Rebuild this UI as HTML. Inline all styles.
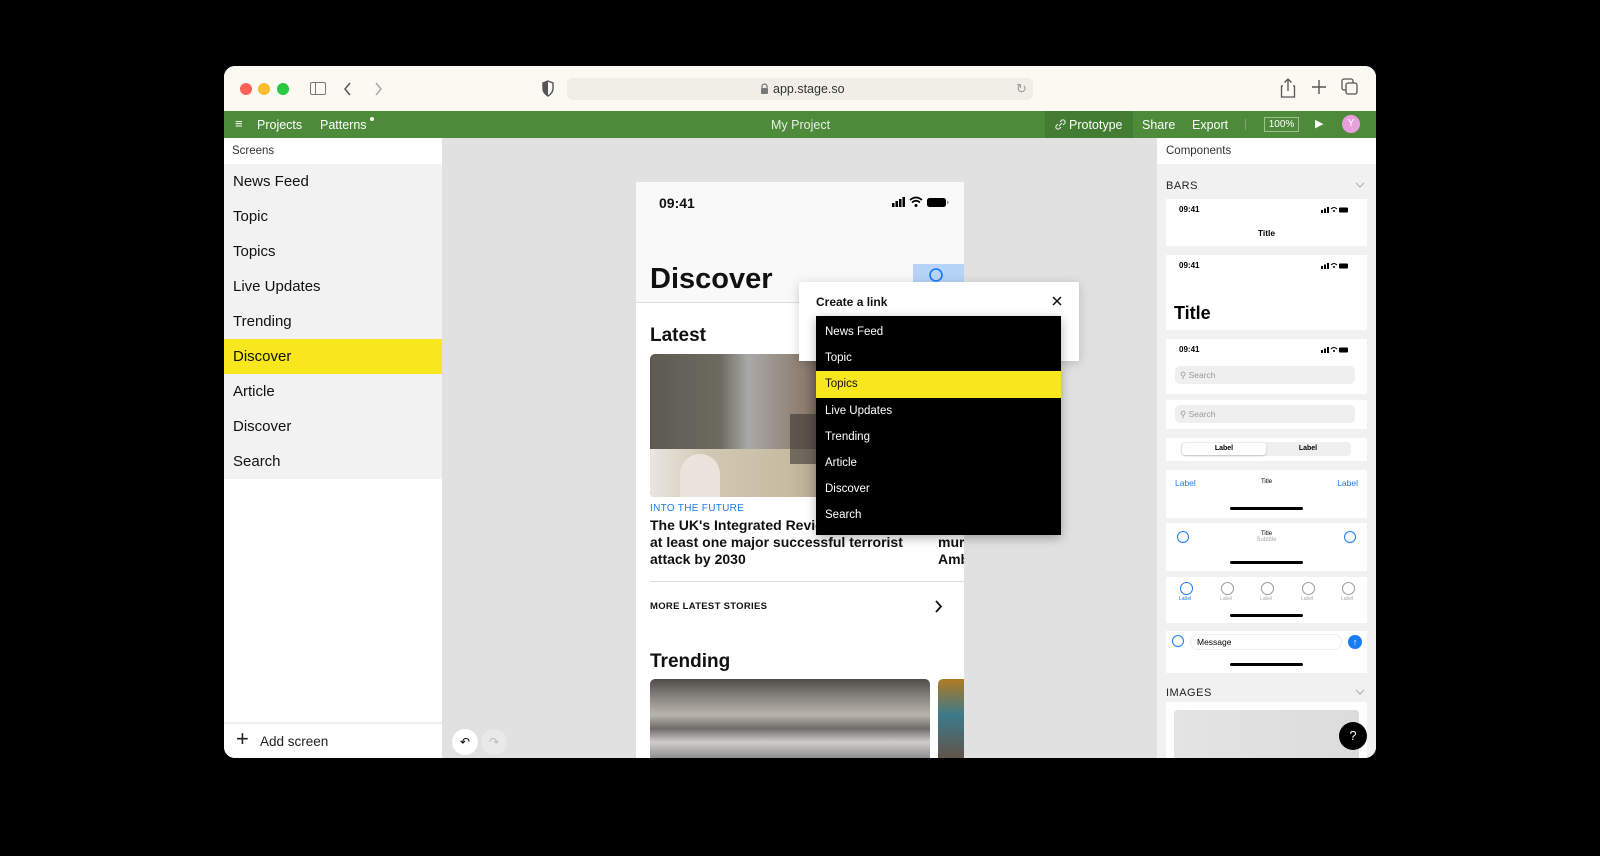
<!DOCTYPE html>
<html><head><meta charset="utf-8"><style>
*{box-sizing:border-box;margin:0;padding:0}
body{width:1600px;height:856px;background:#000;font-family:"Liberation Sans",sans-serif;position:relative;overflow:hidden}
.a{position:absolute}
.win{left:224px;top:66px;width:1152px;height:692px;background:#fff;border-radius:11px;overflow:hidden}
.t{white-space:nowrap}
.side div.i{position:absolute;left:0;width:218px;height:35px;background:#f2f2f2;font-size:15px;padding-left:9px;line-height:36px;color:#111}
.card{position:absolute;left:9px;width:201px;background:#fff}
.dd div{height:26.2px;line-height:27px;padding-left:9px;font-size:11.5px;color:#fff}
.sb{position:absolute;left:155px;top:7px}
</style></head><body>
<div class="a win">
 <div class="a" style="left:0;top:0;width:1152px;height:45px;background:#fbfaf2"></div>
 <div class="a" style="left:16px;top:17px;width:12px;height:12px;border-radius:6px;background:#fe5f57"></div>
 <div class="a" style="left:34px;top:17px;width:12px;height:12px;border-radius:6px;background:#febc2e"></div>
 <div class="a" style="left:53px;top:17px;width:12px;height:12px;border-radius:6px;background:#28c840"></div>
 <div class="a" style="left:86px;top:16px;width:16px;height:13px;border:1.3px solid #777;border-radius:2px"><div style="width:5px;height:100%;border-right:1.3px solid #777"></div></div>
 <svg class="a" style="left:118px;top:14px" width="12" height="18"><path d="M8 3 L3 9 L8 15" stroke="#555" stroke-width="1.5" fill="none"/></svg>
 <svg class="a" style="left:148px;top:14px" width="12" height="18"><path d="M4 3 L9 9 L4 15" stroke="#aaa" stroke-width="1.5" fill="none"/></svg>
 <svg class="a" style="left:317px;top:14px" width="14" height="17"><path d="M7 1 L12 3 V9 C12 12 10 14 7 16 C4 14 2 12 2 9 V3 Z" stroke="#555" stroke-width="1.4" fill="none"/><path d="M7 1 V16 C4 14 2 12 2 9 V3 Z" fill="#555"/></svg>
 <div class="a" style="left:343px;top:12px;width:466px;height:22px;background:#efeee7;border-radius:6px"></div>
 <svg class="a" style="left:536px;top:17px" width="9" height="12"><path d="M2 5 V3.5 A2.5 2.5 0 0 1 7 3.5 V5" stroke="#777" stroke-width="1.2" fill="none"/><rect x="1" y="5" width="7" height="6" rx="1" fill="#777"/></svg>
 <div class="a t" style="left:549px;top:16px;font-size:12.5px;color:#333">app.stage.so</div>
 <div class="a t" style="left:792px;top:15px;font-size:13px;color:#999">&#8635;</div>
 <svg class="a" style="left:1056px;top:11px" width="16" height="22"><path d="M3 9 H1.5 V20 H14.5 V9 H13 M8 14 V2 M4.5 5.5 L8 2 L11.5 5.5" stroke="#555" stroke-width="1.3" fill="none"/></svg>
 <svg class="a" style="left:1087px;top:13px" width="16" height="16"><path d="M8 1 V15 M1 8 H15" stroke="#555" stroke-width="1.4"/></svg>
 <svg class="a" style="left:1117px;top:12px" width="18" height="18"><rect x="1" y="1" width="11" height="11" rx="2" stroke="#555" stroke-width="1.3" fill="none"/><rect x="5" y="5" width="11" height="11" rx="2" stroke="#555" stroke-width="1.3" fill="#fbfaf2"/></svg>
 <div class="a" style="left:0;top:45px;width:1152px;height:27px;background:#4d8b3a;color:#fff;font-size:12.5px">
  <div class="a t" style="left:11px;top:5px;font-size:13px">&#8801;</div>
  <div class="a t" style="left:33px;top:7px">Projects</div>
  <div class="a t" style="left:96px;top:7px">Patterns</div>
  <div class="a" style="left:146px;top:6px;width:4px;height:4px;border-radius:2px;background:#fff"></div>
  <div class="a t" style="left:547px;top:7px;color:#e8f0e4">My Project</div>
  <div class="a" style="left:821px;top:0;width:88px;height:27px;background:#437c33"></div>
  <svg class="a" style="left:830px;top:7px" width="13" height="13"><path d="M5 8 L8 5 M4 6 L2.5 7.5 A2 2 0 0 0 5.5 10.5 L7 9 M6 4 L7.5 2.5 A2 2 0 0 1 10.5 5.5 L9 7" stroke="#dde8d8" stroke-width="1.2" fill="none"/></svg>
  <div class="a t" style="left:845px;top:7px">Prototype</div>
  <div class="a t" style="left:918px;top:7px">Share</div>
  <div class="a t" style="left:968px;top:7px">Export</div>
  <div class="a" style="left:1021px;top:8px;width:1px;height:11px;background:#7aa96a"></div>
  <div class="a t" style="left:1040px;top:6px;width:35px;height:15px;border:1px solid #9cc08e;font-size:10px;text-align:center;line-height:13px">100%</div>
  <div class="a t" style="left:1091px;top:6px;font-size:11px">&#9654;</div>
  <div class="a" style="left:1118px;top:4px;width:18px;height:18px;border-radius:9px;background:#e99fdd;font-size:10px;text-align:center;line-height:18px">Y</div>
 </div>
 <div class="a side" style="left:0;top:72px;width:218px;height:620px;background:#fff">
  <div class="a t" style="left:8px;top:7px;font-size:11.5px;color:#333">Screens</div>
  <div class="i" style="top:26px">News Feed</div>
  <div class="i" style="top:61px">Topic</div>
  <div class="i" style="top:96px">Topics</div>
  <div class="i" style="top:131px">Live Updates</div>
  <div class="i" style="top:166px">Trending</div>
  <div class="i" style="top:201px;background:#f8e71c">Discover</div>
  <div class="i" style="top:236px">Article</div>
  <div class="i" style="top:271px">Discover</div>
  <div class="i" style="top:306px">Search</div>
  <div class="a" style="left:0;top:584px;width:218px;height:2px;background:#efefef"></div>
  <div class="a t" style="left:12px;top:588px;font-size:22px;font-weight:300;color:#222">+</div>
  <div class="a t" style="left:36px;top:596px;font-size:13.5px;color:#222">Add screen</div>
 </div>
 <div class="a" style="left:218px;top:72px;width:715px;height:620px;background:#e1e1e1;overflow:hidden">
  <div class="a" style="left:10px;top:591px;width:26px;height:26px;border-radius:13px;background:#fff;font-size:12px;text-align:center;line-height:26px">&#8630;</div>
  <div class="a" style="left:39px;top:591px;width:26px;height:26px;border-radius:13px;background:#e9e9e9;color:#bbb;font-size:12px;text-align:center;line-height:26px">&#8631;</div>
  <div class="a" style="left:194px;top:44px;width:328px;height:580px;background:#fff;overflow:hidden">
   <div class="a" style="left:0;top:0;width:328px;height:121px;background:#f9f9f9;border-bottom:1px solid #ddd"></div>
   <div class="a t" style="left:23px;top:13px;font-size:14px;font-weight:bold;color:#111">09:41</div>
   <svg class="a" style="left:256px;top:14px" width="60" height="12"><rect x="0" y="7" width="2.5" height="4" fill="#000"/><rect x="3.5" y="5" width="2.5" height="6" fill="#000"/><rect x="7" y="3" width="2.5" height="8" fill="#000"/><rect x="10.5" y="1" width="2.5" height="10" fill="#000"/><path d="M18 4 Q24 -1 30 4 M20 6.5 Q24 3 28 6.5" stroke="#000" stroke-width="1.6" fill="none"/><circle cx="24" cy="9.5" r="1.5"/><rect x="35" y="2" width="19" height="9" rx="2.5" fill="#000"/><rect x="55" y="5" width="1.5" height="3" fill="#999"/></svg>
   <div class="a t" style="left:14px;top:81px;font-size:29px;font-weight:bold;color:#111">Discover</div>
   <div class="a" style="left:277px;top:82px;width:51px;height:27px;background:#b6d3f8"></div>
   <svg class="a" style="left:292px;top:85px" width="18" height="20"><circle cx="8" cy="8" r="6" stroke="#1677ff" stroke-width="1.6" fill="none"/></svg>
   <div class="a t" style="left:14px;top:143px;font-size:19px;font-weight:bold;color:#111">Latest</div>
   <div class="a" style="left:14px;top:172px;width:280px;height:143px;border-radius:5px;overflow:hidden;background:linear-gradient(90deg,#5d5a52 0%,#6d6a60 25%,#a8a9a6 35%,#8d7c6e 55%,#3e3b39 70%,#8a817a 90%)">
    <div class="a" style="left:0;top:95px;width:280px;height:48px;background:linear-gradient(90deg,#e9e6e1 0%,#d2c9b4 20%,#c7bba0 50%,#8c8070 80%,#3a3532 100%)"></div>
    <div class="a" style="left:30px;top:100px;width:40px;height:43px;border-radius:20px 20px 0 0;background:#ebe4dc"></div>
    <div class="a" style="left:140px;top:60px;width:80px;height:50px;background:#3a3532;opacity:.6"></div>
   </div>
   <div class="a" style="left:302px;top:172px;width:30px;height:143px;border-radius:5px;background:linear-gradient(#8d6f58,#4a3f3a)"></div>
   <div class="a t" style="left:14px;top:321px;font-size:10px;color:#1a7cf2;letter-spacing:.3px">INTO THE FUTURE</div>
   <div class="a" style="left:14px;top:335px;font-size:14px;font-weight:bold;line-height:17px;color:#111;width:300px">The UK's Integrated Review<br>at least one major successful terrorist<br>attack by 2030</div>
   <div class="a" style="left:302px;top:352px;font-size:14px;font-weight:bold;line-height:17px;color:#111">mur<br>Amb</div>
   <div class="a" style="left:14px;top:399px;width:314px;height:1px;background:#ddd"></div>
   <div class="a t" style="left:14px;top:419px;font-size:9.5px;font-weight:bold;color:#111;letter-spacing:.3px">MORE LATEST STORIES</div>
   <svg class="a" style="left:298px;top:418px" width="10" height="14"><path d="M2 1 L7 6.5 L2 12" stroke="#111" stroke-width="1.8" fill="none"/></svg>
   <div class="a t" style="left:14px;top:469px;font-size:19px;font-weight:bold;color:#111">Trending</div>
   <div class="a" style="left:14px;top:497px;width:280px;height:90px;border-radius:5px;background:linear-gradient(180deg,#4e4c48 0%,#888580 20%,#b9b5ac 40%,#6e6c68 55%,#cfcdca 70%,#999 85%,#555 100%)"></div>
   <div class="a" style="left:302px;top:497px;width:30px;height:90px;border-radius:5px;background:linear-gradient(#b07a23,#3c7a8a 40%,#6b4a3a)"></div>
  </div>
  <div class="a" style="left:357px;top:144px;width:280px;height:79px;background:#fff;box-shadow:0 2px 10px rgba(0,0,0,.18)"></div>
  <div class="a t" style="left:374px;top:157px;font-size:12px;font-weight:bold;color:#111">Create a link</div>
  <svg class="a" style="left:610px;top:158px" width="10" height="10"><path d="M1 1 L9 9 M9 1 L1 9" stroke="#111" stroke-width="1.5"/></svg>
  <div class="a dd" style="left:374px;top:178px;width:245px;height:219px;background:#000;padding-top:3px;box-shadow:0 3px 10px rgba(0,0,0,.3)">
   <div>News Feed</div><div>Topic</div><div style="background:#f8e71c;color:#111">Topics</div><div>Live Updates</div><div>Trending</div><div>Article</div><div>Discover</div><div>Search</div>
  </div>
 </div>
 <div class="a" style="left:933px;top:72px;width:219px;height:620px;background:#f1f1f1;overflow:hidden">
  <div class="a" style="left:0;top:0;width:219px;height:26px;background:#fff"></div>
  <div class="a t" style="left:9px;top:7px;font-size:11.5px;color:#333">Components</div>
  <div class="a t" style="left:9px;top:42px;font-size:11px;color:#222;letter-spacing:.5px">BARS</div>
  <svg class="a" style="left:198px;top:44px" width="10" height="6"><path d="M1 1 L5 5 L9 1" stroke="#aaa" fill="none"/></svg>
  <div class="card" style="top:61px;height:47px"><div class="a t" style="left:13px;top:6px;font-size:8px;font-weight:bold">09:41</div><svg class="sb" width="28" height="7"><rect x="0" y="4" width="2" height="3"/><rect x="3" y="2.5" width="2" height="4.5"/><rect x="6" y="1" width="2" height="6"/><path d="M10 3 Q13 0 16 3" stroke="#000" fill="none"/><circle cx="13" cy="5" r="1"/><rect x="18" y="1.5" width="9" height="5" rx="1"/></svg><div class="a t" style="left:0;width:201px;text-align:center;top:29px;font-size:8.5px;font-weight:bold">Title</div></div>
  <div class="card" style="top:117px;height:75px"><div class="a t" style="left:13px;top:6px;font-size:8px;font-weight:bold">09:41</div><svg class="sb" width="28" height="7"><rect x="0" y="4" width="2" height="3"/><rect x="3" y="2.5" width="2" height="4.5"/><rect x="6" y="1" width="2" height="6"/><path d="M10 3 Q13 0 16 3" stroke="#000" fill="none"/><circle cx="13" cy="5" r="1"/><rect x="18" y="1.5" width="9" height="5" rx="1"/></svg><div class="a t" style="left:8px;top:48px;font-size:18px;font-weight:bold">Title</div></div>
  <div class="card" style="top:201px;height:55px"><div class="a t" style="left:13px;top:6px;font-size:8px;font-weight:bold">09:41</div><svg class="sb" width="28" height="7"><rect x="0" y="4" width="2" height="3"/><rect x="3" y="2.5" width="2" height="4.5"/><rect x="6" y="1" width="2" height="6"/><path d="M10 3 Q13 0 16 3" stroke="#000" fill="none"/><circle cx="13" cy="5" r="1"/><rect x="18" y="1.5" width="9" height="5" rx="1"/></svg><div class="a" style="left:9px;top:27px;width:180px;height:18px;border-radius:5px;background:#efefef;font-size:8.5px;color:#999;line-height:18px;padding-left:5px">&#9906;&#xFE0E; Search</div></div>
  <div class="card" style="top:262px;height:29px"><div class="a" style="left:9px;top:5px;width:180px;height:18px;border-radius:5px;background:#efefef;font-size:8.5px;color:#999;line-height:18px;padding-left:5px">&#9906;&#xFE0E; Search</div></div>
  <div class="card" style="top:300px;height:23px"><div class="a" style="left:15px;top:4px;width:170px;height:14px;border-radius:4px;background:#efefef"></div><div class="a" style="left:16px;top:5px;width:84px;height:12px;border-radius:3px;background:#fff;box-shadow:0 1px 2px rgba(0,0,0,.2);font-size:7px;font-weight:bold;text-align:center;line-height:12px">Label</div><div class="a" style="left:100px;top:5px;width:84px;font-size:7px;font-weight:bold;text-align:center;line-height:12px">Label</div></div>
  <div class="card" style="top:332px;height:48px"><div class="a t" style="left:9px;top:8px;font-size:8.5px;color:#1a7cf2">Label</div><div class="a t" style="left:0;width:201px;text-align:center;top:9px;font-size:6px">Title</div><div class="a t" style="right:9px;top:8px;font-size:8.5px;color:#1a7cf2">Label</div><div class="a" style="left:64px;top:37px;width:73px;height:3px;border-radius:2px;background:#000"></div></div>
  <div class="card" style="top:385px;height:48px"><div class="a" style="left:11px;top:8px;width:12px;height:12px;border-radius:6px;border:1.3px solid #1a7cf2"></div><div class="a t" style="left:0;width:201px;text-align:center;top:8px;font-size:6px">Title<br><span style="color:#aaa">Subtitle</span></div><div class="a" style="right:11px;top:8px;width:12px;height:12px;border-radius:6px;border:1.3px solid #1a7cf2"></div><div class="a" style="left:64px;top:38px;width:73px;height:3px;border-radius:2px;background:#000"></div></div>
  <div class="card" style="top:439px;height:46px">
   <div class="a" style="left:14px;top:5px;width:13px;height:13px;border-radius:7px;border:1.3px solid #1a7cf2"></div><div class="a" style="left:55px;top:5px;width:13px;height:13px;border-radius:7px;border:1.3px solid #999"></div><div class="a" style="left:95px;top:5px;width:13px;height:13px;border-radius:7px;border:1.3px solid #999"></div><div class="a" style="left:136px;top:5px;width:13px;height:13px;border-radius:7px;border:1.3px solid #999"></div><div class="a" style="left:176px;top:5px;width:13px;height:13px;border-radius:7px;border:1.3px solid #999"></div>
   <div class="a t" style="left:13px;top:19px;font-size:5px;color:#1a7cf2">Label</div><div class="a t" style="left:54px;top:19px;font-size:5px;color:#aaa">Label</div><div class="a t" style="left:94px;top:19px;font-size:5px;color:#aaa">Label</div><div class="a t" style="left:135px;top:19px;font-size:5px;color:#aaa">Label</div><div class="a t" style="left:175px;top:19px;font-size:5px;color:#aaa">Label</div>
   <div class="a" style="left:64px;top:37px;width:73px;height:3px;border-radius:2px;background:#000"></div></div>
  <div class="card" style="top:493px;height:42px"><div class="a" style="left:6px;top:4px;width:12px;height:12px;border-radius:6px;border:1.3px solid #1a7cf2"></div><div class="a" style="left:24px;top:3px;width:152px;height:16px;border-radius:8px;border:1px solid #eee;font-size:8.5px;line-height:14px;padding-left:6px">Message</div><div class="a" style="left:182px;top:4px;width:14px;height:14px;border-radius:7px;background:#1a7cf2;color:#fff;font-size:9px;text-align:center;line-height:14px">&#8593;</div><div class="a" style="left:64px;top:32px;width:73px;height:3px;border-radius:2px;background:#000"></div></div>
  <div class="a t" style="left:9px;top:549px;font-size:11px;color:#222;letter-spacing:.5px">IMAGES</div>
  <svg class="a" style="left:198px;top:551px" width="10" height="6"><path d="M1 1 L5 5 L9 1" stroke="#aaa" fill="none"/></svg>
  <div class="a" style="left:9px;top:564px;width:201px;height:70px;background:#fff"></div>
  <div class="a" style="left:17px;top:572px;width:185px;height:60px;border-radius:4px;background:linear-gradient(90deg,#e4e4e4,#dcdcdc)"></div>
 </div>
 <div class="a" style="left:1115px;top:656px;width:28px;height:28px;border-radius:14px;background:#000;color:#fff;font-size:13px;text-align:center;line-height:28px">?</div>
</div>
</body></html>
